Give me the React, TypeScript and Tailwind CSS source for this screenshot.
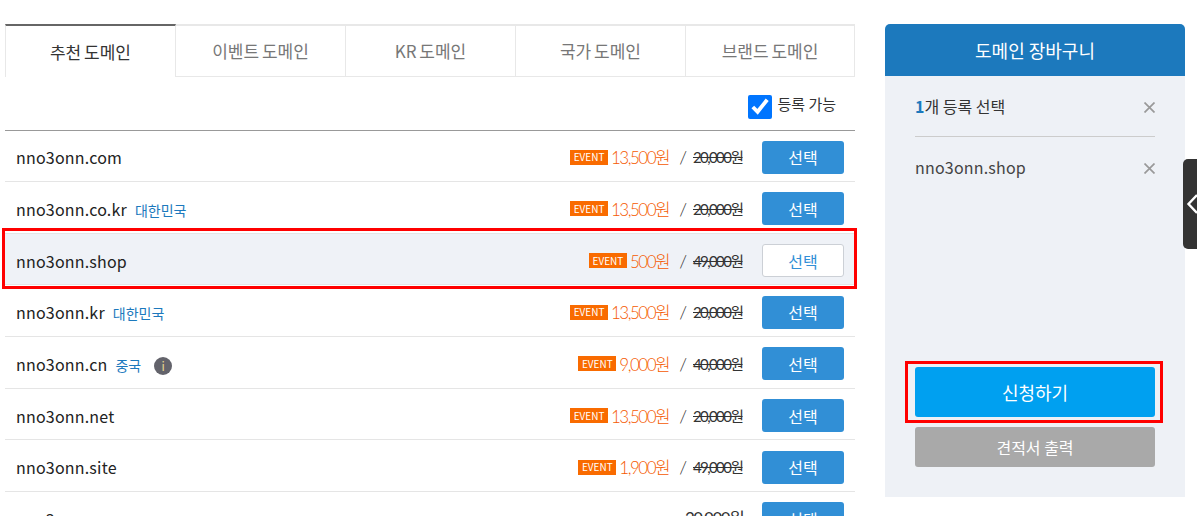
import React from "react";

const KR = "font-['Noto_Sans_CJK_KR','Noto_Sans',sans-serif]";
const NUM = "font-['Lato','Noto_Sans_CJK_KR',sans-serif]";

type Row = { name: string; country?: string; info?: boolean; price?: string; old?: string; plain?: string; selected?: boolean };

const rows: Row[] = [
  { name: "nno3onn.com", price: "13,500원", old: "20,000원" },
  { name: "nno3onn.co.kr", country: "대한민국", price: "13,500원", old: "20,000원" },
  { name: "nno3onn.shop", price: "500원", old: "49,000원", selected: true },
  { name: "nno3onn.kr", country: "대한민국", price: "13,500원", old: "20,000원" },
  { name: "nno3onn.cn", country: "중국", info: true, price: "9,000원", old: "40,000원" },
  { name: "nno3onn.net", price: "13,500원", old: "20,000원" },
  { name: "nno3onn.site", price: "1,900원", old: "49,000원" },
  { name: "nno3onn.xyz", plain: "20,000원" },
];

const tabs = ["추천 도메인", "이벤트 도메인", "KR 도메인", "국가 도메인", "브랜드 도메인"];

function Close() {
  return (
    <svg width="11" height="11" viewBox="0 0 11 11" className="shrink-0">
      <path d="M0.5 0.5 L10.5 10.5 M10.5 0.5 L0.5 10.5" stroke="#999" strokeWidth="1.7" fill="none" />
    </svg>
  );
}

function DomainRow({ r }: { r: Row }) {
  return (
    <div className={`relative flex h-[51.67px] items-center border-b border-[#e5e5e5] pl-[11px] pr-[11px] pt-[3px] ${r.selected ? "bg-[#eff2f7]" : ""}`}>
      <span className="text-[16px] leading-none tracking-[0.2px] text-[#222]">{r.name}</span>
      {r.country && <span className="ml-[8px] mt-[2px] text-[14px] leading-none text-[#1c79bd]">{r.country}</span>}
      {r.info && (
        <span className="ml-[13px] mt-[4px] flex h-[18px] w-[18px] items-center justify-center rounded-full bg-[#63636b] text-[12px] leading-none text-[#ead98f]">
          i
        </span>
      )}
      <div className="ml-auto flex items-center">
        {r.price && (
          <>
            <span className="mr-[3px] flex h-[15px] w-[38px] items-center justify-center bg-[#f96b00] text-[10px] leading-none text-white">
              EVENT
            </span>
            <span className={`mt-[1px] text-[17px] font-light leading-none tracking-[-1.5px] text-[#f55a00] ${NUM}`}>{r.price}</span>
          </>
        )}
        {r.old && (
          <>
            <span className={`ml-[10px] mr-[6px] text-[18px] font-light leading-none text-[#333] ${NUM}`}>/</span>
            <span className={`mt-[1px] w-[50px] whitespace-nowrap text-[15px] leading-none tracking-[-1.6px] text-[#333] line-through ${NUM}`}>{r.old}</span>
          </>
        )}
        {r.plain && (
          <span className={`w-[58px] whitespace-nowrap text-[17px] leading-none tracking-[-1.5px] text-[#333] ${NUM}`}>{r.plain}</span>
        )}
        <button
          className={`ml-[19px] h-[33px] w-[82px] rounded-[3px] text-[16px] ${
            r.selected ? "border border-[#ccd0d6] bg-white text-[#318fd6]" : "bg-[#318fd6] text-white"
          }`}
        >
          선택
        </button>
      </div>
      {r.selected && (
        <div className="pointer-events-none absolute -bottom-[5px] -left-[3px] -right-[2px] -top-[6px] border-[3px] border-[#ff0000]" />
      )}
    </div>
  );
}

export default function App() {
  return (
    <div className={`relative flex h-[516px] w-[1197px] items-start gap-[30px] overflow-hidden bg-white pl-[5px] pt-[24px] ${KR}`}>
      <div className="w-[850px] shrink-0">
        <div className="flex h-[53px] border-t-2 border-[#e8e8e8]">
          {tabs.map((t, i) => (
            <div
              key={t}
              className={
                i === 0
                  ? "-mt-[2px] flex h-[53px] w-[171px] items-center justify-center border-l border-r border-t-2 border-[#e8e8e8] border-t-[#666] text-[17px] text-[#333] [word-spacing:-1px]"
                  : `flex items-center justify-center border-b border-r border-[#e8e8e8] text-[17px] text-[#777] [word-spacing:-1px] ${i === 4 ? "w-[169px]" : "w-[170px]"}`
              }
            >
              {t}
            </div>
          ))}
        </div>
        <div className="flex h-[53.5px] items-center justify-end gap-[5px] border-b border-[#999] pr-[19px]">
          <input type="checkbox" checked readOnly className="m-0 mt-[7px] h-6 w-6" />
          <span className="mt-[2px] text-[15px] text-[#333]">등록 가능</span>
        </div>
        {rows.map((r) => (
          <DomainRow key={r.name} r={r} />
        ))}
      </div>

      <div className="flex h-[473px] w-[300px] shrink-0 flex-col">
        <div className="flex h-[52px] items-center justify-center rounded-t-[5px] bg-[#1c79bd] text-[18px] text-white">도메인 장바구니</div>
        <div className="flex flex-1 flex-col bg-[#eef1f6] px-[30px] pb-[30px]">
          <div className="flex h-[61px] items-center justify-between border-b border-[#ccc]">
            <span className="text-[16px] text-[#333]">
              <b className="font-bold text-[#1c79bd]">1</b>개 등록 선택
            </span>
            <span className="mt-[3px] flex">
              <Close />
            </span>
          </div>
          <div className="flex h-[62px] items-center justify-between">
            <span className="-mt-[2px] text-[16px] tracking-[0.2px] text-[#444]">nno3onn.shop</span>
            <Close />
          </div>
          <div className="relative mt-auto flex h-[50px] items-center justify-center rounded-[3px] bg-[#00a0f0] text-[18px] text-white">
            신청하기
            <div className="pointer-events-none absolute -bottom-[6px] -left-[10px] -right-[8px] -top-[6px] border-[3px] border-[#ff0000]" />
          </div>
          <div className="mt-[10px] flex h-[40px] items-center justify-center rounded-[3px] bg-[#a9a9a9] text-[16px] text-white">견적서 출력</div>
        </div>
      </div>

      <div className="absolute right-0 top-[159px] flex h-[90px] w-[14px] items-center rounded-l-[5px] bg-[#333]">
        <svg width="14" height="26" viewBox="0 0 14 26">
          <path d="M14 4 L5.5 13 L14 22" stroke="#fff" strokeWidth="2.4" fill="none" />
        </svg>
      </div>
    </div>
  );
}
